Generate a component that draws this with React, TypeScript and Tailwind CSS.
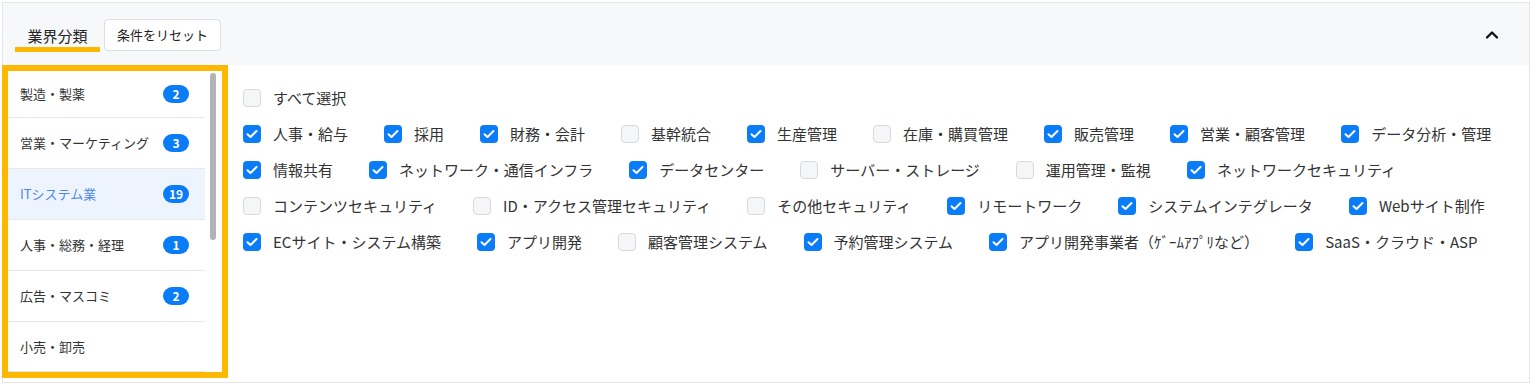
import React from "react";

type Item = { label: string; checked: boolean };

const rows: Item[][] = [
  [{ label: "すべて選択", checked: false }],
  [
    { label: "人事・給与", checked: true },
    { label: "採用", checked: true },
    { label: "財務・会計", checked: true },
    { label: "基幹統合", checked: false },
    { label: "生産管理", checked: true },
    { label: "在庫・購買管理", checked: false },
    { label: "販売管理", checked: true },
    { label: "営業・顧客管理", checked: true },
    { label: "データ分析・管理", checked: true },
  ],
  [
    { label: "情報共有", checked: true },
    { label: "ネットワーク・通信インフラ", checked: true },
    { label: "データセンター", checked: true },
    { label: "サーバー・ストレージ", checked: false },
    { label: "運用管理・監視", checked: false },
    { label: "ネットワークセキュリティ", checked: true },
  ],
  [
    { label: "コンテンツセキュリティ", checked: false },
    { label: "ID・アクセス管理セキュリティ", checked: false },
    { label: "その他セキュリティ", checked: false },
    { label: "リモートワーク", checked: true },
    { label: "システムインテグレータ", checked: true },
    { label: "Webサイト制作", checked: true },
  ],
  [
    { label: "ECサイト・システム構築", checked: true },
    { label: "アプリ開発", checked: true },
    { label: "顧客管理システム", checked: false },
    { label: "予約管理システム", checked: true },
    { label: "アプリ開発事業者（ｹﾞｰﾑｱﾌﾟﾘなど）", checked: true },
    { label: "SaaS・クラウド・ASP", checked: true },
  ],
];

const categories: { name: string; count?: number; selected?: boolean; h: string }[] = [
  { name: "製造・製薬", count: 2, h: "h-[47px]" },
  { name: "営業・マーケティング", count: 3, h: "h-[51px]" },
  { name: "ITシステム業", count: 19, selected: true, h: "h-[51px]" },
  { name: "人事・総務・経理", count: 1, h: "h-[51px]" },
  { name: "広告・マスコミ", count: 2, h: "h-[51px]" },
  { name: "小売・卸売", h: "h-[50px]" },
];

function Checkbox({ checked }: { checked: boolean }) {
  if (checked) {
    return (
      <span className="flex h-[18px] w-[18px] shrink-0 items-center justify-center rounded-[4px] bg-[#0a7cf8]">
        <svg width="12" height="10" viewBox="0 0 12 10" fill="none">
          <path d="M1.5 5.2L4.5 8L10.5 2" stroke="white" strokeWidth="2" strokeLinecap="round" strokeLinejoin="round" />
        </svg>
      </span>
    );
  }
  return <span className="h-[18px] w-[18px] shrink-0 rounded-[4px] border border-[#d6d9de] bg-[#f5f6f8]" />;
}

export default function App() {
  return (
    <div className="bg-white p-[2px] font-['Noto_Sans_CJK_JP','Noto_Sans',sans-serif] text-[#333]">
      <div className="flex h-[381px] flex-col border border-[#e4e6ea]">
        <div className="flex h-[62px] shrink-0 items-start bg-[#f7f8fa] pl-[12px] pt-[16px]">
          <div className="flex w-[85px] flex-col items-center pt-[6px]">
            <span className="text-[15px] leading-[22px] text-[#222]">業界分類</span>
            <span className="h-[5px] w-full bg-[#ffb800]" />
          </div>
          <button className="ml-[4px] flex h-[32px] w-[117px] items-center justify-center rounded-[4px] border border-[#dcdfe4] bg-white text-[13px] text-[#222]">
            条件をリセット
          </button>
          <div className="ml-auto mr-[30px] mt-[9px] flex h-[14px] w-[14px] items-center justify-center">
            <svg width="14" height="10" viewBox="0 0 14 10" fill="none">
              <path d="M2 7.5L7 2.5L12 7.5" stroke="#111" strokeWidth="2.4" strokeLinecap="round" strokeLinejoin="round" />
            </svg>
          </div>
        </div>
        <div className="flex flex-1">
          <div className="-ml-px flex h-[313px] w-[226px] shrink-0 border-[6px] border-[#ffb800] bg-white">
            <div className="flex w-[197px] flex-col">
              {categories.map((c) => (
                <div
                  key={c.name}
                  className={`${c.h} flex shrink-0 items-center justify-between border-b border-[#e6e7ea] pl-[12px] pr-[16px] ${
                    c.selected ? "bg-[#eef4fe]" : ""
                  }`}
                >
                  <span className={`text-[13px] ${c.selected ? "text-[#4b87ee]" : "text-[#333]"}`}>{c.name}</span>
                  {c.count !== undefined && (
                    <span className="flex h-[18px] w-[26px] items-center justify-center rounded-full bg-[#0a7cf8] text-[12px] font-semibold leading-none text-white">
                      {c.count}
                    </span>
                  )}
                </div>
              ))}
            </div>
            <div className="flex-1 pl-[5px] pt-[2px]">
              <div className="h-[167px] w-[6px] rounded-full bg-[#b3b3b3]" />
            </div>
          </div>
          <div className="flex flex-1 flex-col pl-[15px] pt-[15px]">
            {rows.map((row, i) => (
              <div key={i} className="flex h-9 items-center gap-x-[36px]">
                {row.map((it) => (
                  <label key={it.label} className="flex items-center gap-[12px] whitespace-nowrap">
                    <Checkbox checked={it.checked} />
                    <span className="text-[15px] leading-[22px] text-[#333]">{it.label}</span>
                  </label>
                ))}
              </div>
            ))}
          </div>
        </div>
      </div>
    </div>
  );
}
